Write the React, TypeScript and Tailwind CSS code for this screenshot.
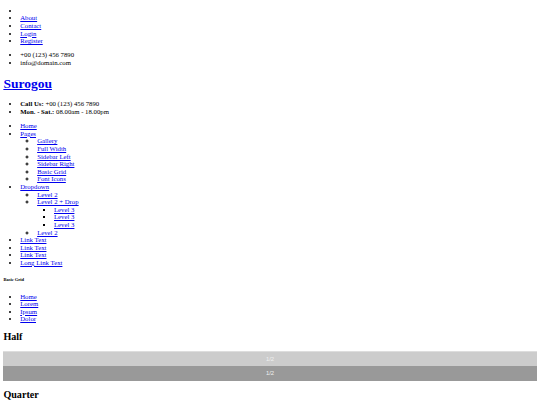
import React from "react";

const A = ({ children }: { children: React.ReactNode }) => (
  <a href="#" className="text-[#0000ee] underline">
    {children}
  </a>
);

const ulTop = "list-disc pl-[16.875px] my-[6.75px]";
const ulSub = "list-[circle] pl-[16.875px] my-0";
const ulSub2 = "list-[square] pl-[16.875px] my-0";

export default function App() {
  return (
    <div className="bg-white min-h-[405px] text-black font-['Liberation_Serif',serif] text-[6.75px] leading-[7.594px] flow-root">
      <div className="m-[3.375px]">
        <ul className={ulTop}>
          <li>
            <i></i>
          </li>
          <li>
            <A>About</A>
          </li>
          <li>
            <A>Contact</A>
          </li>
          <li>
            <A>Login</A>
          </li>
          <li>
            <A>Register</A>
          </li>
        </ul>
        <ul className={ulTop}>
          <li>+00 (123) 456 7890</li>
          <li>info@domain.com</li>
        </ul>
        <h1 className="text-[13.5px] leading-[15.61px] font-bold my-[9.045px]">
          <A>Surogou</A>
        </h1>
        <ul className={ulTop}>
          <li>
            <strong className="font-bold">Call Us:</strong> +00 (123) 456 7890
          </li>
          <li>
            <strong className="font-bold">Mon. - Sat.:</strong> 08.00am - 18.00pm
          </li>
        </ul>
        <ul className={ulTop}>
          <li>
            <A>Home</A>
          </li>
          <li>
            <A>Pages</A>
            <ul className={ulSub}>
              <li>
                <A>Gallery</A>
              </li>
              <li>
                <A>Full Width</A>
              </li>
              <li>
                <A>Sidebar Left</A>
              </li>
              <li>
                <A>Sidebar Right</A>
              </li>
              <li>
                <A>Basic Grid</A>
              </li>
              <li>
                <A>Font Icons</A>
              </li>
            </ul>
          </li>
          <li>
            <A>Dropdown</A>
            <ul className={ulSub}>
              <li>
                <A>Level 2</A>
              </li>
              <li>
                <A>Level 2 + Drop</A>
                <ul className={ulSub2}>
                  <li>
                    <A>Level 3</A>
                  </li>
                  <li>
                    <A>Level 3</A>
                  </li>
                  <li>
                    <A>Level 3</A>
                  </li>
                </ul>
              </li>
              <li>
                <A>Level 2</A>
              </li>
            </ul>
          </li>
          <li>
            <A>Link Text</A>
          </li>
          <li>
            <A>Link Text</A>
          </li>
          <li>
            <A>Link Text</A>
          </li>
          <li>
            <A>Long Link Text</A>
          </li>
        </ul>
        <h6 className="text-[4.52px] leading-[5.06px] font-bold my-[10.5px]">Basic Grid</h6>
        <ul className={ulTop}>
          <li>
            <A>Home</A>
          </li>
          <li>
            <A>Lorem</A>
          </li>
          <li>
            <A>Ipsum</A>
          </li>
          <li>
            <A>Dolor</A>
          </li>
        </ul>
        <h2 className="text-[10.125px] leading-[11.39px] font-bold my-[8.4px]">Half</h2>
        <div className="font-['Liberation_Sans',sans-serif] text-[5.9px] leading-[7px] text-[#f0f0f0]">
          <div className="h-[14.77px] bg-[#cccccc] border-t border-[#dddddd] flex items-center justify-center">
            1/2
          </div>
          <div className="h-[14.77px] bg-[#999999] flex items-center justify-center">
            1/2
          </div>
        </div>
        <h2 className="text-[10.125px] leading-[11.39px] font-bold text-black my-[8.4px]">Quarter</h2>
      </div>
    </div>
  );
}
